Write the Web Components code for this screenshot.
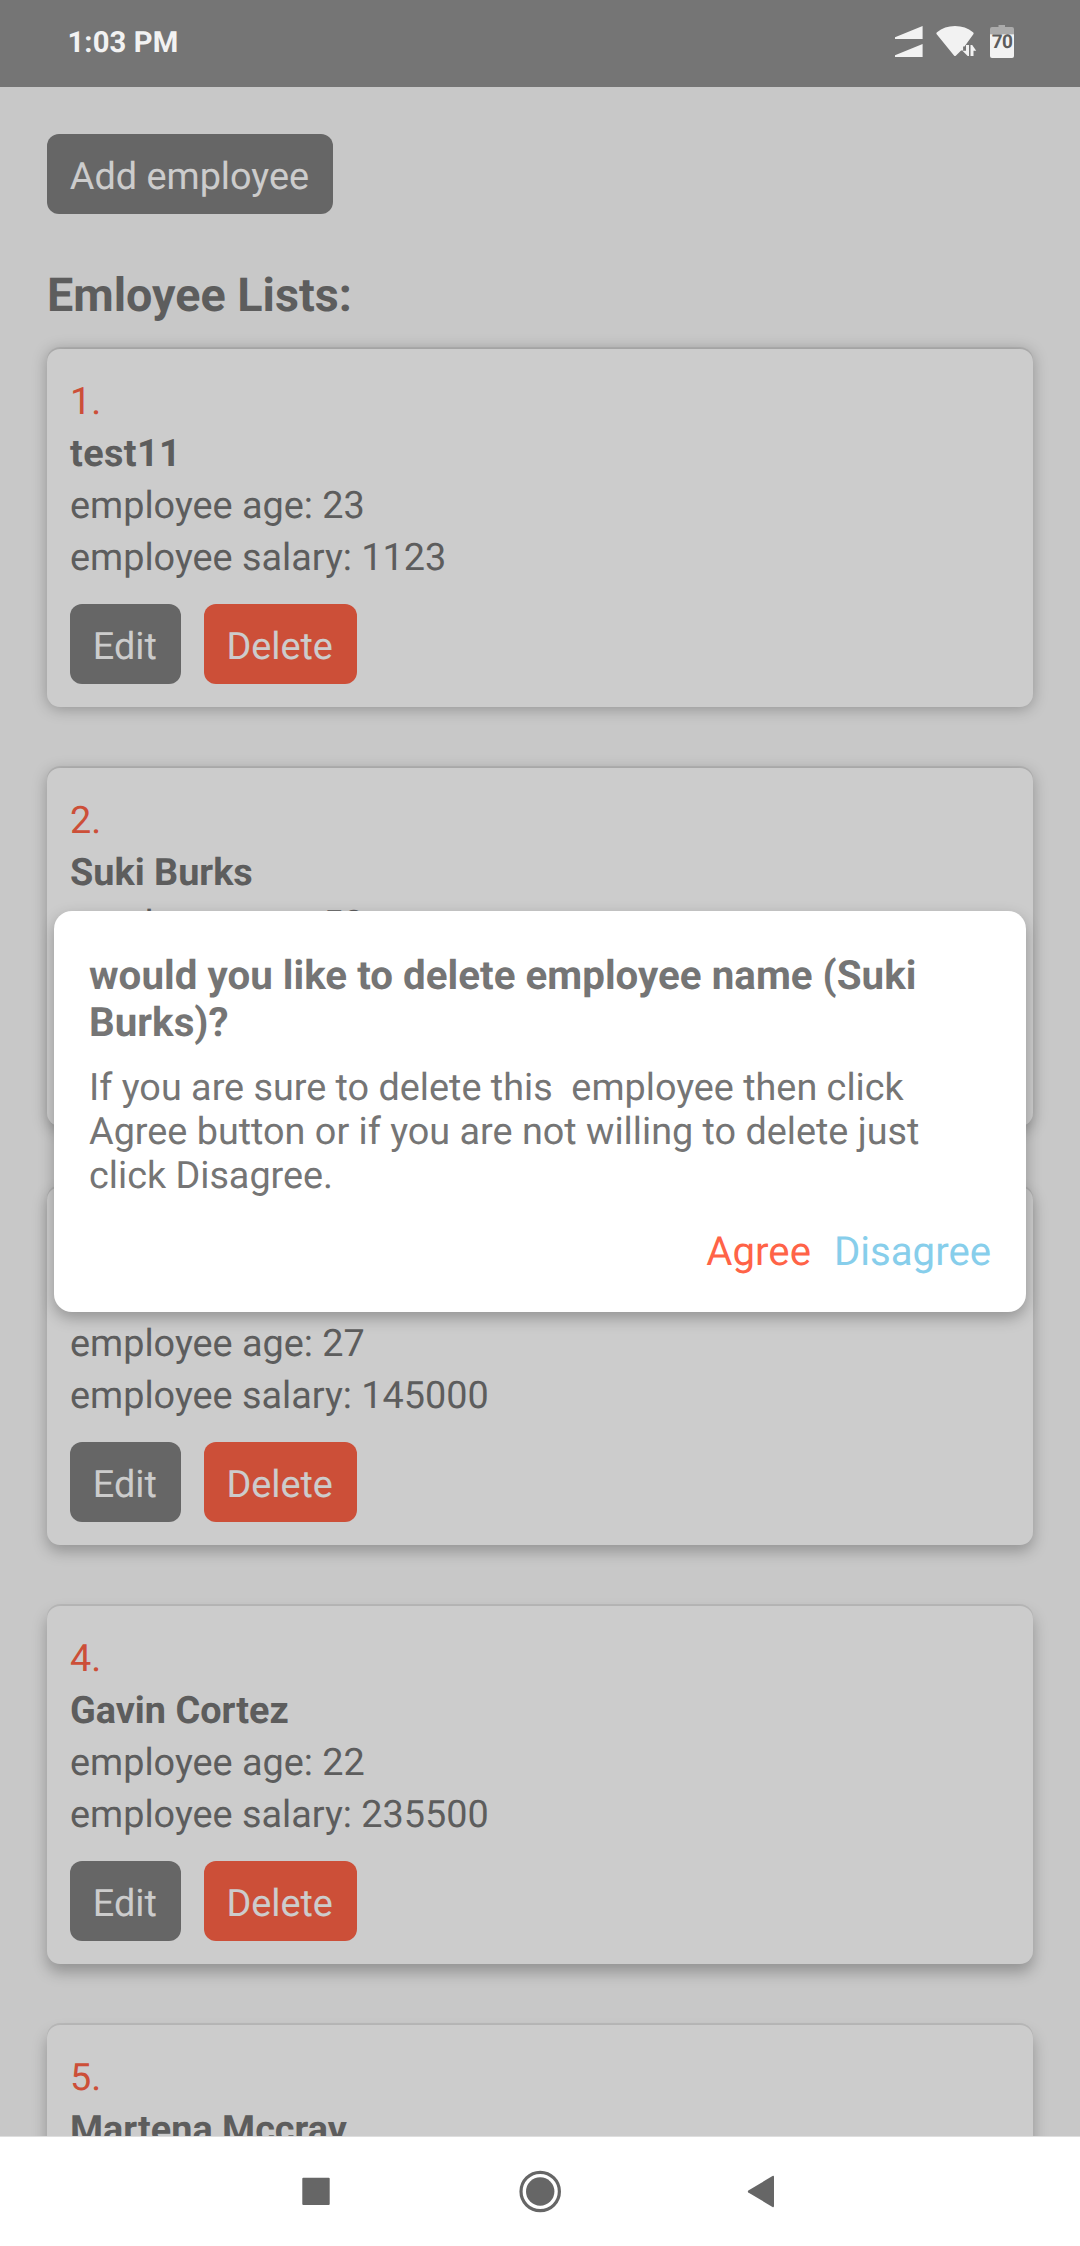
<!DOCTYPE html>
<html lang="en">
<head>
<meta charset="utf-8">
<title>Employees</title>
<style>
html, body { margin: 0; padding: 0; }
body { width: 1080px; height: 2246px; overflow: hidden; font-family: Roboto, "Liberation Sans", sans-serif; text-rendering: geometricPrecision; }
</style>
</head>
<body>
<phone-screen>
  <status-bar slot="top" time="1:03 PM" battery="70"></status-bar>
  <app-button>Add employee</app-button>
  <list-heading>Emloyee Lists:</list-heading>
  <employee-card number="1" age="23" salary="1123" style="--drop:1.5px;--track:.4px">test11</employee-card>
  <employee-card number="2" age="53" salary="114500" style="--drop:3.5px">Suki Burks</employee-card>
  <employee-card number="3" age="27" salary="145000" style="--drop:6px">Byrom Cortez</employee-card>
  <employee-card number="4" age="22" salary="235500" style="--drop:8px">Gavin Cortez</employee-card>
  <employee-card number="5" age="46" salary="324050" style="--drop:9px">Martena Mccray</employee-card>
  <confirm-dialog slot="overlay">
    <span slot="title">would you like to delete employee name (Suki Burks)?</span>
    <span slot="body">If you are sure to delete this&nbsp; employee then click Agree button or if you are not willing to delete just click Disagree.</span>
  </confirm-dialog>
  <nav-bar slot="bottom"></nav-bar>
</phone-screen>
<script>
function define(name, render) {
  customElements.define(name, class extends HTMLElement {
    connectedCallback() {
      if (this.shadowRoot) return;
      this.attachShadow({ mode: 'open' }).innerHTML = render(this);
    }
  });
}

define('phone-screen', () => `
<style>
:host { display: flex; flex-direction: column; position: relative; width: 1080px; height: 2246px; overflow: hidden; background: #fafafa; }
main { flex: 1; min-height: 0; position: relative; overflow: hidden; }
.scroll { display: flex; flex-direction: column; align-items: flex-start; padding: 47px 47px 0; }
.scrim { position: absolute; inset: 0; background: rgba(0,0,0,.2); display: flex; align-items: flex-start; justify-content: center; padding-top: 824px; }
</style>
<slot name="top"></slot>
<main><div class="scroll"><slot></slot></div><div class="scrim"><slot name="overlay"></slot></div></main>
<slot name="bottom"></slot>`);

define('status-bar', el => `
<style>
:host { display: flex; align-items: center; height: 87px; box-sizing: border-box; padding: 0 66px 4px 67.5px; background: #757575; color: #f2f2f2; flex: none; }
.time { flex: 1; font: 700 29.2px/40px Roboto, sans-serif; letter-spacing: .1px; padding-top: 2px; }
svg { display: block; flex: none; height: 36px; }
.icons { display: flex; gap: 13px; }
.bat { font: 700 19px Roboto, sans-serif; fill: #5c5c5c; }
</style>
<span class="time">${el.getAttribute('time')}</span>
<div class="icons">
<svg width="28" viewBox="895 23 28 36" fill="#f2f2f2"><path d="M895 36.2L922.6 25v13H895zM895 54.2L922.6 43v13H895z"/></svg>
<svg width="41" viewBox="936 23 41 36" fill="#f2f2f2"><path d="M936.5 33Q936 32 937 31.2C942 27.2 948 25 955 25s13 2.200 18 6.200q1 .8.5 1.800l-9 12.500h-1.400v4h-2l-5.300 5.200q-.8.8-1.600 0z"/><path d="M966 44h3v11h-1.300l-5.300-5.300h3.600zM970.500 55V44h1.700l4 5.800h-2.700V55z"/></svg>
<svg width="24" viewBox="990 23 24 36"><path d="M998.5 24h6.500v2h7q2 0 2 2v5.400h-24V28q0-2 2-2h6.500z" fill="#ababab"/><path d="M990 33.300h24V55q0 2-2 2h-20q-2 0-2-2z" fill="#f2f2f2"/><text class="bat" x="991.8" y="46.800" textLength="21.200">${el.getAttribute('battery')}</text></svg>
</div>`);

define('app-button', () => `
<style>
:host { display: inline-flex; align-items: center; box-sizing: border-box; height: 80px; padding: 5px 23.800px 0 22.800px; border-radius: 12px; background: var(--fill, #808080); color: #fff; font-size: 37.800px; line-height: 44px; white-space: nowrap; }
</style><slot></slot>`);

define('list-heading', () => `
<style>
:host { display: block; margin: 54px 0 25px; font-size: 46.700px; line-height: 56px; font-weight: 700; color: #757575; }
</style><slot></slot>`);

define('employee-card', el => `
<style>
:host { display: flex; flex-direction: column; align-self: stretch; box-sizing: border-box; height: 358px; padding: 27px 23px 0; margin-bottom: 61px; border-radius: 13px; background: #fff; color: #757575; font-size: 37.800px; line-height: 52px; box-shadow: 0 -2px 0 rgba(0,0,0,.07), 0 var(--drop) 15px rgba(0,0,0,.27); }
.number { color: #ff6347; }
.name { font-weight: 700; letter-spacing: var(--track, 0); }
.actions { display: flex; gap: 23px; margin-top: 20px; }
.danger { --fill: #ff6347; }
</style>
<span class="number">${el.getAttribute('number')}.</span>
<span class="name"><slot></slot></span>
<span>employee age: ${el.getAttribute('age')}</span>
<span>employee salary: ${el.getAttribute('salary')}</span>
<div class="actions"><app-button>Edit</app-button><app-button class="danger">Delete</app-button></div>`);

define('confirm-dialog', () => `
<style>
:host { display: flex; flex-direction: column; box-sizing: border-box; width: 972px; height: 401px; padding: 40.500px 35px 0; border-radius: 18px; background: #fff; color: #757575; box-shadow: 0 6px 15px rgba(0,0,0,.28); }
.title { font-size: 40.300px; line-height: 47px; font-weight: 700; letter-spacing: .02px; }
.body { margin-top: 20.500px; font-size: 37.780px; line-height: 44px; }
.actions { display: flex; justify-content: flex-end; gap: 23px; margin-top: 30px; font-size: 40.160px; line-height: 47px; }
.agree { color: #ff6347; }
.disagree { color: #87ceeb; }
</style>
<div class="title"><slot name="title"></slot></div>
<div class="body"><slot name="body"></slot></div>
<div class="actions"><span class="agree">Agree</span><span class="disagree">Disagree</span></div>`);

define('nav-bar', () => `
<style>
:host { display: flex; align-items: center; justify-content: center; gap: 176px; flex: none; box-sizing: border-box; height: 110px; border-top: 1px solid #dedede; background: #fff; }
svg { display: block; width: 48px; height: 48px; fill: #666; }
</style>
<svg viewBox="0 0 48 48"><rect x="10.300" y="9.700" width="27.400" height="27.400" rx="1"/></svg>
<svg viewBox="0 0 48 48"><circle cx="24.200" cy="23.500" r="19.200" fill="none" stroke="#666" stroke-width="3.200"/><circle cx="24.200" cy="23.500" r="14.200"/></svg>
<svg viewBox="0 0 48 48"><path d="M8.300 22.500L32.500 8.100q1.500-.8 1.500.8v29.200q0 1.600-1.500.8L8.300 24.500q-1-1 0-2z"/></svg>`);
</script>
</body>
</html>
